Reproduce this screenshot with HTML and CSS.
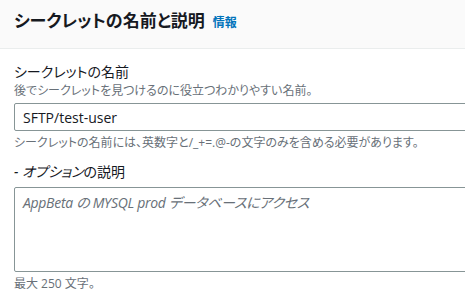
FILE: index.html
```html
<!DOCTYPE html>
<html lang="ja">
<head>
  <meta charset="UTF-8">
  <meta name="viewport" content="width=device-width, initial-scale=1.0">
  <title>シークレットの名前と説明</title>
  <link rel="stylesheet" href="styles.css">
</head>
<body>
  <div class="panel">
    <div class="panel-header">
      <h2 class="panel-title">シークレットの名前と説明</h2>
      <a class="info-link" href="#">情報</a>
    </div>
    <div class="panel-body">
      <div class="field">
        <label class="field-label" for="secret-name">シークレットの名前</label>
        <div class="field-desc">後でシークレットを見つけるのに役立つわかりやすい名前。</div>
        <input class="text-input" id="secret-name" type="text" value="SFTP/test-user">
        <div class="field-hint">シークレットの名前には、英数字と/_+=.@-の文字のみを含める必要があります。</div>
      </div>
      <div class="field">
        <label class="field-label" for="secret-desc"><i>- オプション</i>の説明</label>
        <textarea class="text-area" id="secret-desc" placeholder="AppBeta の MYSQL prod データベースにアクセス"></textarea>
        <div class="field-hint">最大 250 文字。</div>
      </div>
    </div>
  </div>
</body>
</html>
```

FILE: styles.css
```css
html, body {
  margin: 0;
  padding: 0;
  overflow: hidden;
  background-color: #fff;
}

body {
  font-family: "Open Sans", "Noto Sans CJK JP", sans-serif;
  font-feature-settings: "palt";
  color: #16191f;
}

.panel {
  width: 620px;
}

.panel-header {
  display: flex;
  align-items: baseline;
  gap: 8px;
  height: 49px;
  padding: 0 14px;
  box-sizing: border-box;
  background-color: #fafafa;
  border-bottom: 1px solid #eaeded;
}

.panel-title {
  margin: 0;
  padding-top: 9px;
  font-size: 17px;
  font-weight: 700;
  line-height: 24px;
}

.info-link {
  font-size: 12px;
  font-weight: 700;
  color: #0073bb;
  text-decoration: none;
}

.panel-body {
  padding: 12px 14px 0;
}

.field {
  margin-bottom: 10px;
}

.field-label {
  display: block;
  font-size: 14px;
  line-height: 22px;
}

.field-desc,
.field-hint {
  font-size: 12px;
  line-height: 16px;
  color: #687078;
}

.field-desc {
  margin-bottom: 4px;
}

.field-hint {
  margin-top: 4px;
}

.text-input,
.text-area {
  display: block;
  width: 100%;
  box-sizing: border-box;
  border: 1px solid #879596;
  border-radius: 2px;
  font-family: inherit;
  font-feature-settings: "palt";
  color: #16191f;
  background: #fff;
}

.text-input {
  height: 28px;
  padding: 0 8px;
  font-size: 14px;
}

.text-area {
  height: 85px;
  margin-top: 4px;
  padding: 4px 8px;
  font-size: 14px;
  line-height: 22px;
  resize: none;
}

.text-area::placeholder {
  color: #687078;
  font-style: italic;
  letter-spacing: -0.3px;
}
```
